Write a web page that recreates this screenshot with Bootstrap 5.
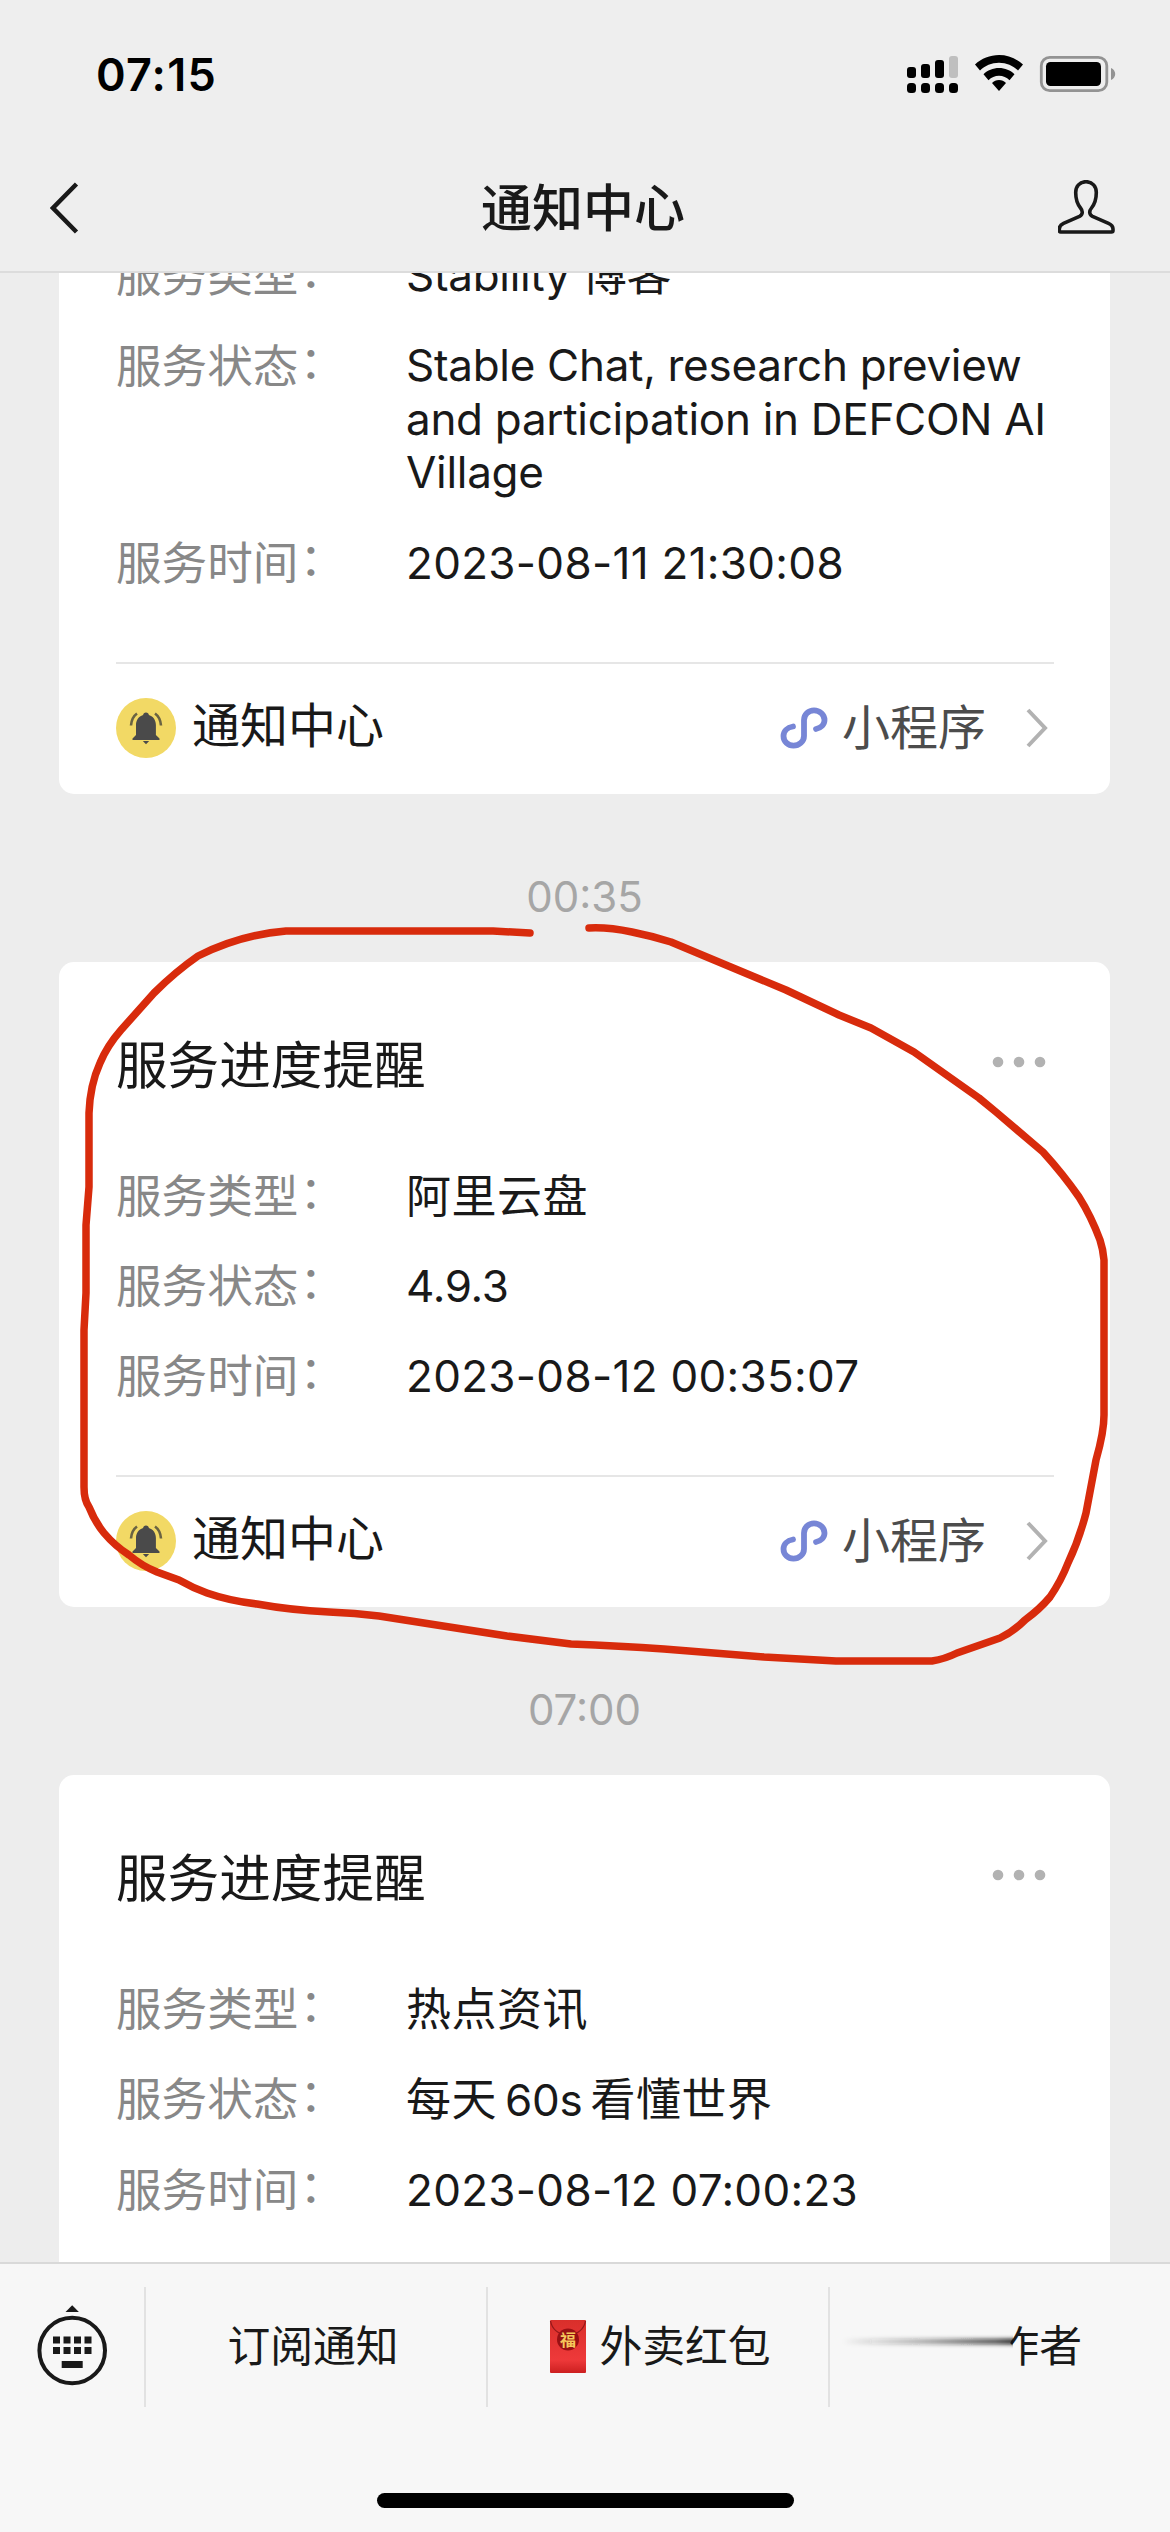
<!DOCTYPE html>
<html lang="zh-CN">
<head>
<meta charset="utf-8">
<meta name="viewport" content="width=device-width, initial-scale=1">
<title>通知中心</title>
<link href="https://cdn.jsdelivr.net/npm/bootstrap@5.3.0/dist/css/bootstrap.min.css" rel="stylesheet">
<style>
  body { width: 1170px; height: 2532px; background: #ededed; color: #191919; font-family: Inter, "Noto Sans CJK SC", sans-serif; overflow: hidden; }
  svg { display: block; flex: none; }
  .top-area { height: 273px; background: #eee; border-bottom: 2px solid #dcdcdc; }
  .status-bar { height: 150px; padding: 0 54px 0 96px; }
  .clock { font-size: 45px; font-weight: 600; line-height: 54px; letter-spacing: 1.2px; color: #000; }
  .title-bar { height: 121px; padding: 0 54px 5px 50px; }
  .page-title { font-size: 51px; font-weight: 500; line-height: 60px; padding-top: 1px; }
  .feed { min-height: 0; padding: 0 60px 0 59px; }
  .notice { border: 0; border-radius: 15px; padding: 0 56px 0 57px; }
  .notice-cut { margin-top: -24px; border-radius: 0 0 15px 15px; }
  .notice-last { min-height: 560px; }
  .notice-title { font-size: 51.6px; line-height: 62px; padding: 72px 0 74px; font-weight: 400; }
  .fields { font-size: 45px; line-height: 53.5px; }
  .field { margin-bottom: 36.5px; }
  .field dt { width: 290px; color: #888; font-weight: 400; font-size: 45.6px; }
  .field dd { font-weight: 400; letter-spacing: .5px; }
  .field .latin { font-size: 44px; letter-spacing: -.3px; }
  .field .date { font-size: 44px; letter-spacing: .3px; }
  .notice-cut .latin { position: relative; top: -1px; }
  .colon { display: inline-block; transform: translate(1px, -4px); }
  .notice-foot { border-top: 2px solid #e6e6e6; height: 132px; margin-top: 35px; font-size: 48px; line-height: 60px; padding: 0 6px 2px 0; }
  .source { margin-left: 16px; padding-bottom: 5px; }
  .mini { color: #4c4c4c; }
  .mini svg { margin-right: 14px; }
  .next { margin-left: 40px; }
  .stamp { height: 168px; padding-top: 76px; font-size: 42px; line-height: 54px; color: #a6a6a6; }
  .bottom-area { height: 270px; background: #f7f7f7; border-top: 2px solid #d9d9d9; }
  .menu-bar { height: 120px; margin-top: 23px; font-size: 42.8px; line-height: 60px; }
  .keys { width: 144px; padding-bottom: 5px; }
  .menu-item { width: 342px; border-left: 2px solid #e2e2e2; }
  .menu-first { padding-right: 6px; }
  .menu-author { padding-right: 88px; }
  .home-bar { width: 417px; height: 15px; margin-top: 86px; border-radius: 8px; background: #000; }
  .smear { left: 0; top: 0; }
  .ink { left: 0; top: 0; pointer-events: none; z-index: 5; }
</style>
</head>
<body class="position-relative d-flex flex-column">
<header class="top-area flex-shrink-0 position-relative">
  <div class="status-bar d-flex align-items-center justify-content-between">
    <span class="clock">07:15</span>
    <svg width="210" height="42" viewBox="906 54 210 42">
      <g><rect x="907" y="83" width="9" height="10" rx="3.5"/><rect x="921" y="83" width="9" height="10" rx="3.5"/><rect x="935" y="83" width="9" height="10" rx="3.5"/><rect x="949" y="83" width="9" height="10" rx="3.5"/>
      <rect x="907" y="67" width="9" height="11" rx="3"/><rect x="921" y="64" width="9" height="14" rx="3"/><rect x="935" y="60" width="9" height="18" rx="3"/><rect x="949" y="56" width="9" height="22" rx="3" fill="#bfbfbf"/></g>
      <path d="M999 55c9 0 17.500 3.500 24 9.500l-5 6c-5-4.800-11.500-7.800-19-7.800s-14 3-19 7.800l-5-6c6.500-6 15-9.500 24-9.500z"/>
      <path d="M999 68c6 0 11.500 2.300 15.500 6.200l-5 6c-2.800-2.700-6.500-4.400-10.500-4.400s-7.700 1.700-10.500 4.400l-5-6c4-3.900 9.500-6.200 15.500-6.200z"/>
      <path d="M999 80c2.700 0 5.200 1.100 7 3l-7 8-7-8c1.800-1.900 4.300-3 7-3z"/>
      <rect x="1041.300" y="57.300" width="65.500" height="33.400" rx="8.500" fill="none" stroke="#939393" stroke-width="2.800"/>
      <rect x="1046" y="62" width="55" height="24" rx="4.500"/>
      <path d="M1111 68c2.700 1.200 4.200 3.500 4.200 6s-1.500 4.800-4.200 6z" fill="#939393"/>
    </svg>
  </div>
  <div class="title-bar d-flex align-items-center justify-content-between">
    <svg width="58" height="56" viewBox="50 179 58 56" fill="none" stroke="#191919" stroke-width="4.500"><path d="M76.500 183L53 207l23.500 24"/></svg>
    <h1 class="page-title m-0">通知中心</h1>
    <svg width="58" height="56" viewBox="1058 180 58 56" fill="none" stroke="#191919" stroke-width="3.600" stroke-linejoin="round"><path d="M1086 181.700C1092.500 181.700 1096.300 186.500 1096.300 192.500C1096.300 199 1095.500 203 1091.500 208C1089 211 1089 214.500 1092.500 216.300L1108.500 223.300C1111.500 224.700 1113 226.500 1113 229V230.500Q1113 232 1111.500 232H1060.800Q1059.300 232 1059.300 230.500V229C1059.300 226.500 1060.500 224.700 1063.500 223.300L1079.500 216.300C1083 214.500 1083 211 1080.500 208C1076.500 203 1075.700 199 1075.700 192.500C1075.700 186.500 1079.500 181.700 1086 181.700Z"/></svg>
  </div>
</header>

<svg width="0" height="0" class="position-absolute">
  <symbol id="bell" viewBox="0 0 60 60">
    <circle cx="30" cy="30" r="30" fill="#f2d965"/>
    <g fill="#4a4a4a"><path d="M30 14.500c1.700 0 2.700 1.100 2.900 2.500 4.600 1.500 7 5.300 7 10V37l3.600 3.500V42H16.500v-1.500L20 37V27c0-4.700 2.500-8.500 7.100-10 .200-1.400 1.200-2.500 2.900-2.500z"/><path d="M26.800 43h6.400L30 46.300z"/></g>
    <path d="M21 15.500c-3.300 2.300-5.500 6-6 12M39 15.500c3.300 2.300 5.500 6 6 12" fill="none" stroke="#6a6342" stroke-width="2.600"/>
  </symbol>
  <symbol id="link" viewBox="0 0 48 44">
    <path d="M13 20.500C7 21.500 3.500 25.500 3.500 30c0 5.500 4.500 9.700 10 9.700S24 35.500 24 30V14c0-5.500 4.500-9.700 10-9.700S44.500 8.500 44.500 14c0 4.500-3.500 8-8.500 9" fill="none" stroke="#7786d6" stroke-width="5.800" stroke-linecap="round"/>
  </symbol>
  <symbol id="next" viewBox="0 0 22 42"><path d="M2 3l17 18L2 39" fill="none" stroke="#b2b2b2" stroke-width="4"/></symbol>
  <symbol id="more" viewBox="0 0 54 12"><g fill="#b2b2b2"><circle cx="6" cy="6" r="5.300"/><circle cx="27" cy="6" r="5.300"/><circle cx="48" cy="6" r="5.300"/></g></symbol>
</svg>

<main class="feed flex-grow-1 overflow-hidden">
  <article class="card notice notice-cut">
    <dl class="fields m-0">
      <div class="field d-flex"><dt>服务类型<span class="colon">：</span></dt><dd class="m-0 latin">Stability <span class="fields">博客</span></dd></div>
      <div class="field d-flex"><dt>服务状态<span class="colon">：</span></dt><dd class="m-0 latin">Stable Chat, research preview<br>and participation in DEFCON AI<br>Village</dd></div>
      <div class="field d-flex"><dt>服务时间<span class="colon">：</span></dt><dd class="m-0 date">2023-08-11 21:30:08</dd></div>
    </dl>
    <footer class="notice-foot d-flex align-items-center">
      <svg width="60" height="60"><use href="#bell"/></svg><span class="source">通知中心</span>
      <span class="mini ms-auto d-flex align-items-center"><svg width="48" height="44"><use href="#link"/></svg>小程序</span>
      <svg width="22" height="42" class="next"><use href="#next"/></svg>
    </footer>
  </article>
  <div class="stamp text-center">00:35</div>
  <article class="card notice">
    <div class="d-flex justify-content-between align-items-center"><h2 class="notice-title m-0">服务进度提醒</h2><svg width="54" height="12" class="me-2 mb-2"><use href="#more"/></svg></div>
    <dl class="fields m-0">
      <div class="field d-flex"><dt>服务类型<span class="colon">：</span></dt><dd class="m-0">阿里云盘</dd></div>
      <div class="field d-flex"><dt>服务状态<span class="colon">：</span></dt><dd class="m-0 latin">4.9.3</dd></div>
      <div class="field d-flex"><dt>服务时间<span class="colon">：</span></dt><dd class="m-0 date">2023-08-12 00:35:07</dd></div>
    </dl>
    <footer class="notice-foot d-flex align-items-center">
      <svg width="60" height="60"><use href="#bell"/></svg><span class="source">通知中心</span>
      <span class="mini ms-auto d-flex align-items-center"><svg width="48" height="44"><use href="#link"/></svg>小程序</span>
      <svg width="22" height="42" class="next"><use href="#next"/></svg>
    </footer>
  </article>
  <div class="stamp text-center">07:00</div>
  <article class="card notice notice-last">
    <div class="d-flex justify-content-between align-items-center"><h2 class="notice-title m-0">服务进度提醒</h2><svg width="54" height="12" class="me-2 mb-2"><use href="#more"/></svg></div>
    <dl class="fields m-0">
      <div class="field d-flex"><dt>服务类型<span class="colon">：</span></dt><dd class="m-0">热点资讯</dd></div>
      <div class="field d-flex"><dt>服务状态<span class="colon">：</span></dt><dd class="m-0">每天<span class="latin mx-2">60s</span>看懂世界</dd></div>
      <div class="field d-flex"><dt>服务时间<span class="colon">：</span></dt><dd class="m-0 date">2023-08-12 07:00:23</dd></div>
    </dl>
  </article>
</main>

<footer class="bottom-area flex-shrink-0">
  <nav class="menu-bar d-flex">
    <div class="keys d-flex justify-content-center align-items-center flex-shrink-0">
      <svg width="72" height="84" viewBox="36 2302 72 84" fill="#191919"><circle cx="72.200" cy="2349.500" r="32.800" fill="none" stroke="#191919" stroke-width="4"/><path d="M65.500 2311l6.700-6.700 6.700 6.700z"/><path d="M53 2335.500h7v7h-7zM63.500 2335.500h7v7h-7zM74 2335.500h7v7h-7zM84.500 2335.500h7v7h-7zM53 2346h7v7h-7zM63.500 2346h7v7h-7zM74 2346h7v7h-7zM84.500 2346h7v7h-7zM61.700 2360h21v7h-21z"/></svg>
    </div>
    <div class="menu-item menu-first d-flex justify-content-center align-items-center flex-shrink-0">订阅通知</div>
    <div class="menu-item d-flex justify-content-center align-items-center flex-shrink-0">
      <svg width="38" height="54" viewBox="0 0 38 54" class="me-2 ms-1">
        <defs><linearGradient id="rp" x1="0" y1="0" x2="0" y2="1"><stop offset="0" stop-color="#d92f2b"/><stop offset=".75" stop-color="#ee393a"/><stop offset="1" stop-color="#cc1f20"/></linearGradient></defs>
        <rect x="1" y="0" width="36" height="53" rx="1" fill="url(#rp)"/>
        <path d="M1.500 1C3 9 8 14 19 15.500 30 14 35 9 36.500 1" fill="none" stroke="#96181a" stroke-width="1.300"/>
        <circle cx="19" cy="19.500" r="11" fill="#991013"/>
        <text x="19" y="25.500" text-anchor="middle" font-size="16" font-weight="700" fill="#f5c65b" font-family="Noto Sans CJK SC, sans-serif">福</text>
      </svg><span class="ms-1">外卖红包</span></div>
    <div class="menu-item menu-author d-flex justify-content-end align-items-center flex-shrink-0 position-relative"><span>作者</span>
      <svg class="position-absolute smear" width="250" height="120" viewBox="830 2286 250 120">
        <defs><linearGradient id="sm"><stop offset="0" stop-color="#222" stop-opacity="0"/><stop offset=".5" stop-color="#222" stop-opacity=".4"/><stop offset=".9" stop-color="#111" stop-opacity=".8"/><stop offset="1" stop-color="#111"/></linearGradient><filter id="sf" x="-5%" y="-100%" width="110%" height="300%"><feGaussianBlur stdDeviation="0.5 2"/></filter></defs>
        <path d="M980 2320h34l-4 24v30h-30z" fill="#f7f7f7"/>
        <rect x="842" y="2338" width="171" height="5" fill="url(#sm)" filter="url(#sf)"/>
      </svg>
    </div>
  </nav>
  <div class="home-bar mx-auto"></div>
</footer>

<svg class="position-absolute ink" width="1170" height="2532" viewBox="0 0 1170 2532" fill="none" stroke="#d82b0c" stroke-width="7.500" stroke-linecap="round" stroke-linejoin="round">
  <path d="M530 933L493 931H286C250 934 220 945 198 956Q175 972 154 993L121 1030Q107 1046 100 1063Q90 1085 89 1113V1187L86 1225V1293L84 1330V1487Q84 1500 89 1507Q95 1522 104 1533Q115 1546 129 1555Q142 1566 157 1572L179 1580Q193 1588 207 1593Q230 1601 257 1604Q290 1610 329 1612Q355 1613 379 1616L507 1636Q540 1640 571 1644Q620 1646 664 1649L764 1657L836 1661H932Q945 1659 957 1653L1000 1638Q1014 1631 1025 1620Q1040 1609 1050 1597Q1061 1581 1068 1563Q1079 1540 1086 1513L1096 1460Q1104 1432 1104 1415V1260Q1103 1249 1100 1240Q1091 1216 1079 1197Q1063 1174 1043 1152L996 1112L979 1098L914 1052L871 1028L839 1015L786 990L714 960L671 942Q652 936 632 932Q608 927 589 928"/>
</svg>
<script src="https://cdn.jsdelivr.net/npm/bootstrap@5.3.0/dist/js/bootstrap.bundle.min.js"></script>
</body>
</html>
